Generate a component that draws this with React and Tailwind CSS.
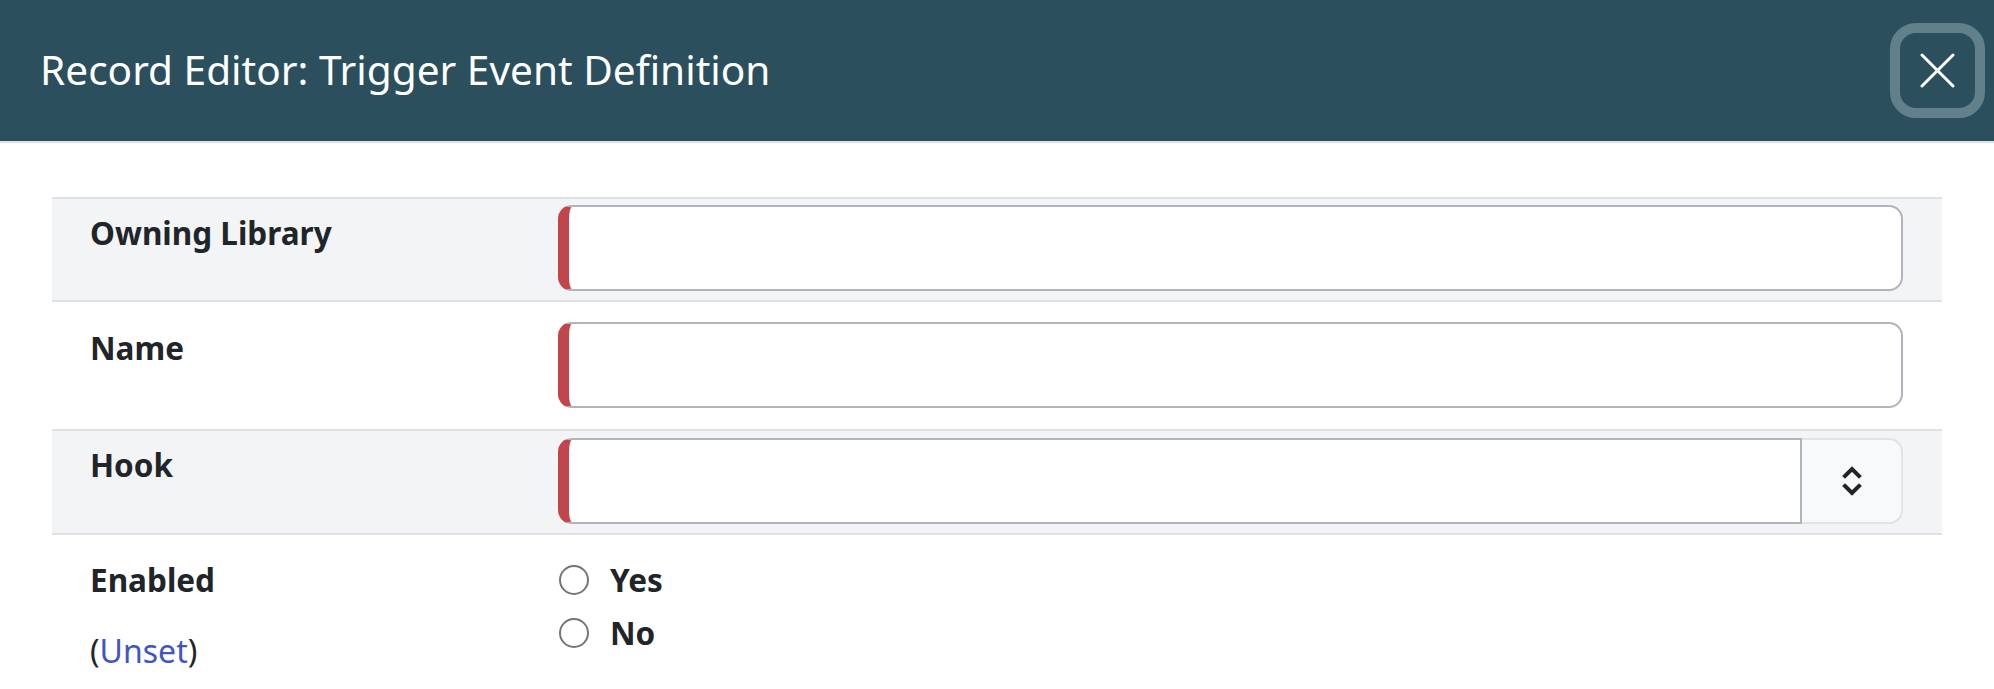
const Label = ({ children, className = '' }) => (
  <div className={`w-[506px] shrink-0 pl-[38px] text-[31.5px] font-bold text-[#212529] ${className}`}>
    {children}
  </div>
);

const RequiredInput = () => (
  <div className="h-[86px] rounded-[14px] border-2 border-[#b1b5bb] border-l-[11px] border-l-[#c1464b] bg-white"></div>
);

const Radio = ({ label }) => (
  <label className="flex items-center gap-[21px]">
    <span className="w-[30px] h-[30px] rounded-full border-2 border-[#767676] bg-white"></span>
    <span className="text-[31.5px] font-bold text-[#212529]">{label}</span>
  </label>
);

export default function App() {
  return (
    <div className="w-[1994px] h-[689px] overflow-hidden bg-white font-['Noto_Sans',sans-serif]">
      {/* Header */}
      <header className="h-[143px] bg-[#2c4f5e] border-b-2 border-[#dee2e6] flex items-center justify-between pl-[40px] pr-[9px]">
        <h4 className="text-[40.6px] text-white">Record Editor: Trigger Event Definition</h4>
        <button className="w-[95px] h-[95px] rounded-[26px] border-[10px] border-[#62808a] flex items-center justify-center">
          <svg width="35" height="35" viewBox="0 0 35 35" fill="none" stroke="white" strokeWidth="3" strokeLinecap="round">
            <line x1="2" y1="2" x2="33" y2="33" />
            <line x1="33" y1="2" x2="2" y2="33" />
          </svg>
        </button>
      </header>

      {/* Body */}
      <main className="px-[52px] pt-[54px]">
        {/* Owning Library */}
        <div className="flex border-t-2 border-[#dee2e6] bg-[#f3f4f6] pt-[6px] pb-[9px]">
          <Label className="pt-[4px]">Owning Library</Label>
          <div className="flex-1 pr-[39px]">
            <RequiredInput />
          </div>
        </div>

        {/* Name */}
        <div className="flex border-t-2 border-[#dee2e6] bg-white pt-[20px] pb-[21px]">
          <Label className="pt-[2px]">Name</Label>
          <div className="flex-1 pr-[39px]">
            <RequiredInput />
          </div>
        </div>

        {/* Hook */}
        <div className="flex border-t-2 border-[#dee2e6] bg-[#f3f4f6] pt-[7px] pb-[9px]">
          <Label className="pt-[3px]">Hook</Label>
          <div className="flex-1 pr-[39px] flex">
            <div className="flex-1 h-[86px] rounded-l-[14px] border-2 border-[#b1b5bb] border-l-[11px] border-l-[#c1464b] bg-white"></div>
            <div className="w-[101px] h-[86px] rounded-r-[14px] border-2 border-l-0 border-[#e0e3e7] bg-[#f8f9fa] flex items-center justify-center">
              <svg width="20" height="34" viewBox="0 0 20 34" fill="none" stroke="#212529" strokeWidth="4" strokeLinecap="square">
                <polyline points="3,12 10,5 17,12" />
                <polyline points="3,22 10,29 17,22" />
              </svg>
            </div>
          </div>
        </div>

        {/* Enabled */}
        <div className="flex border-t-2 border-[#dee2e6] bg-white pt-[21px]">
          <Label>
            <div>Enabled</div>
            <div className="mt-[24px] text-[32px] font-normal">
              (<a className="text-[#3f55c6]">Unset</a>)
            </div>
          </Label>
          <div className="flex-1 flex flex-col gap-[6px] pl-[1px]">
            <Radio label="Yes" />
            <Radio label="No" />
          </div>
        </div>
      </main>
    </div>
  );
}
